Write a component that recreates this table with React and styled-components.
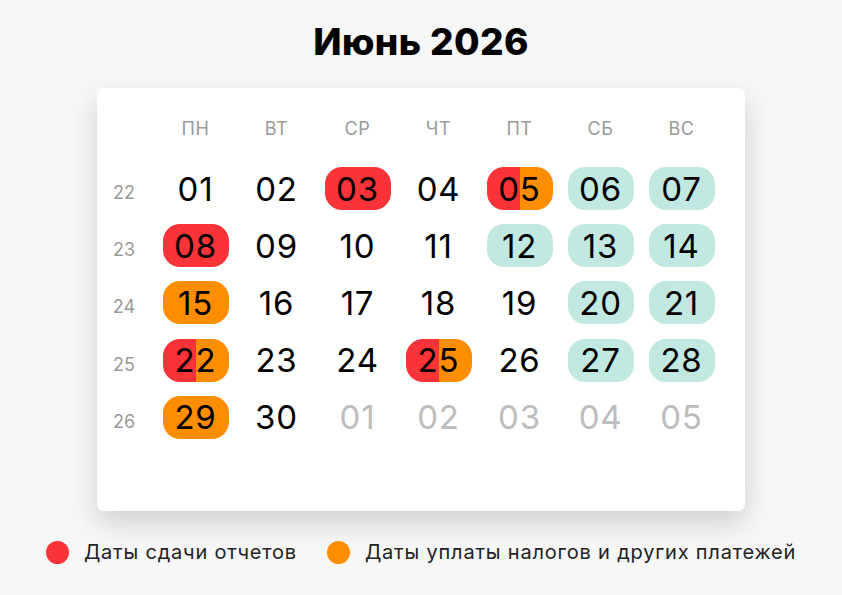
import React from "react";
import styled, { createGlobalStyle } from "styled-components";

const RED = "#fa3338";
const ORANGE = "#ff8d00";
const TEAL = "#c2e9e1";

const weekDays = ["ПН", "ВТ", "СР", "ЧТ", "ПТ", "СБ", "ВС"];

// kind: r = отчеты, o = платежи, ro = оба, w = выходной, m = чужой месяц
const weeks = [
  { n: 22, days: [["01"], ["02"], ["03", "r"], ["04"], ["05", "ro"], ["06", "w"], ["07", "w"]] },
  { n: 23, days: [["08", "r"], ["09"], ["10"], ["11"], ["12", "w"], ["13", "w"], ["14", "w"]] },
  { n: 24, days: [["15", "o"], ["16"], ["17"], ["18"], ["19"], ["20", "w"], ["21", "w"]] },
  { n: 25, days: [["22", "ro"], ["23"], ["24"], ["25", "ro"], ["26"], ["27", "w"], ["28", "w"]] },
  { n: 26, days: [["29", "o"], ["30"], ["01", "m"], ["02", "m"], ["03", "m"], ["04", "m"], ["05", "m"]] },
];

const App = () => {
  return (
    <>
      <GlobalStyle />
      <Page>
        <Title>Июнь 2026</Title>
        <Card>
          <HeadRow>
            <span />
            {weekDays.map((d) => (
              <DayName key={d}>{d}</DayName>
            ))}
          </HeadRow>
          <Body>
            {weeks.map((w) => (
              <React.Fragment key={w.n}>
                <WeekNum>{w.n}</WeekNum>
                {w.days.map(([num, kind], i) => (
                  <Cell key={i}>
                    <Pill kind={kind}>{num}</Pill>
                  </Cell>
                ))}
              </React.Fragment>
            ))}
          </Body>
        </Card>
        <Legend>
          <LegendItem>
            <Dot color={RED} />
            Даты сдачи отчетов
          </LegendItem>
          <LegendItem>
            <Dot color={ORANGE} />
            Даты уплаты налогов и других платежей
          </LegendItem>
        </Legend>
      </Page>
    </>
  );
};

export default App;

/* ================= STYLES ================= */

const GlobalStyle = createGlobalStyle`
  html, body {
    margin: 0;
    padding: 0;
    background: #f7f7f7;
  }
  body {
    font-family: Inter, "Noto Sans", sans-serif;
  }
`;

const Page = styled.div`
  width: 842px;
  height: 595px;
  display: flex;
  flex-direction: column;
  align-items: center;
  padding-top: 18px;
  box-sizing: border-box;
`;

const Title = styled.h1`
  margin: 0;
  font-size: 37px;
  font-weight: 800;
  color: #000;
  line-height: 48px;
  letter-spacing: 0.4px;
`;

const Card = styled.div`
  margin-top: 22px;
  width: 648px;
  height: 423px;
  background: #fff;
  border-radius: 7px;
  box-shadow: 0 12px 28px rgba(0, 0, 0, 0.16);
  padding-top: 25px;
  box-sizing: border-box;
`;

const HeadRow = styled.div`
  display: grid;
  grid-template-columns: 58px repeat(7, 81px);
  height: 30px;
  align-items: center;
`;

const Body = styled.div`
  margin-top: 24px;
  display: grid;
  grid-template-columns: 58px repeat(7, 81px);
  grid-auto-rows: 43px;
  row-gap: 14.2px;
  align-items: center;
`;

const DayName = styled.div`
  text-align: center;
  font-size: 18px;
  color: #9a9a9a;
  letter-spacing: 0.6px;
`;

const WeekNum = styled.div`
  text-align: center;
  padding-right: 4px;
  padding-top: 8px;
  font-size: 18px;
  color: #9a9a9a;
`;

const Cell = styled.div`
  display: flex;
  justify-content: center;
`;

const pillBg = {
  r: RED,
  o: ORANGE,
  ro: `linear-gradient(to right, ${RED} 50%, ${ORANGE} 50%)`,
  w: TEAL,
};

const Pill = styled.div`
  width: 66px;
  height: 43px;
  border-radius: 17px;
  display: flex;
  align-items: center;
  justify-content: center;
  font-size: 33px;
  font-weight: 400;
  letter-spacing: 0.8px;
  color: ${({ kind }) => (kind === "m" ? "#bdbdbd" : "#000")};
  background: ${({ kind }) => pillBg[kind] || "transparent"};
`;

const Legend = styled.div`
  margin-top: 29px;
  display: flex;
  align-items: center;
  gap: 30px;
`;

const LegendItem = styled.div`
  display: flex;
  align-items: center;
  gap: 15px;
  font-size: 20px;
  letter-spacing: 0.8px;
  color: #222;
`;

const Dot = styled.span`
  width: 23px;
  height: 23px;
  border-radius: 50%;
  background: ${({ color }) => color};
`;
